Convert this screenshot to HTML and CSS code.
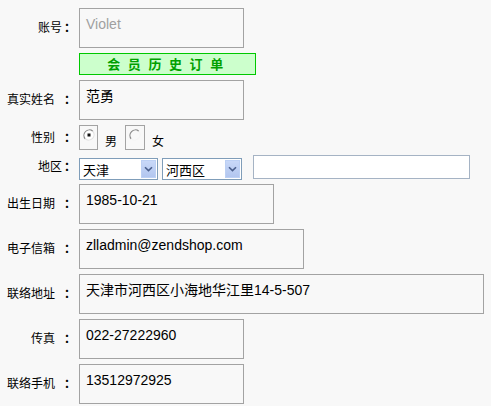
FILE: index.html
```html
<!DOCTYPE html>
<html lang="zh-CN">
<head>
<meta charset="utf-8">
<title>会员资料</title>
<link rel="stylesheet" href="styles.css">
</head>
<body>
<form class="profile">
  <div class="row">
    <span class="label">账号<span class="colon">：</span></span>
    <div class="box w165 muted">Violet</div>
  </div>
  <div class="row">
    <span class="label"></span>
    <a class="btn-history" href="#">会员历史订单</a>
  </div>
  <div class="row">
    <span class="label">真实姓名<span class="colon gap">：</span></span>
    <div class="box w165">范勇</div>
  </div>
  <div class="row row-radio">
    <span class="label">性别<span class="colon gap">：</span></span>
    <span class="radio-box">
      <svg class="radio" width="12" height="12" viewBox="0 0 12 12">
        <path d="M2.2 9.8 A5.4 5.4 0 0 1 9.8 2.2" fill="none" stroke="#8a8a8a" stroke-width="1.2"/>
        <path d="M9.8 2.2 A5.4 5.4 0 0 1 2.2 9.8" fill="none" stroke="#e2e2e2" stroke-width="1.2"/>
        <circle cx="6" cy="6" r="4.3" fill="#fff"/>
        <rect x="4.5" y="4.5" width="3" height="3" fill="#111"/>
      </svg>
    </span>
    <span class="radio-text">男</span>
    <span class="radio-box wide">
      <svg class="radio" width="12" height="12" viewBox="0 0 12 12">
        <path d="M2.2 9.8 A5.4 5.4 0 0 1 9.8 2.2" fill="none" stroke="#8a8a8a" stroke-width="1.2"/>
        <path d="M9.8 2.2 A5.4 5.4 0 0 1 2.2 9.8" fill="none" stroke="#f4f4f4" stroke-width="1.2"/>
      </svg>
    </span>
    <span class="radio-text">女</span>
  </div>
  <div class="row row-area">
    <span class="label">地区<span class="colon">：</span></span>
    <span class="select-wrap">
      <select class="select"><option>天津</option></select>
      <span class="arrow"><svg width="9" height="6" viewBox="0 0 9 6"><path d="M1 1.2 L4.5 4.6 L8 1.2" fill="none" stroke="#4a5f8c" stroke-width="1.6"/></svg></span>
    </span>
    <span class="select-wrap">
      <select class="select s2"><option>河西区</option></select>
      <span class="arrow"><svg width="9" height="6" viewBox="0 0 9 6"><path d="M1 1.2 L4.5 4.6 L8 1.2" fill="none" stroke="#4a5f8c" stroke-width="1.6"/></svg></span>
    </span>
    <input class="text-input" type="text" value="">
  </div>
  <div class="row">
    <span class="label">出生日期<span class="colon gap">：</span></span>
    <div class="box w195">1985-10-21</div>
  </div>
  <div class="row">
    <span class="label">电子信箱<span class="colon gap">：</span></span>
    <div class="box w225">zlladmin@zendshop.com</div>
  </div>
  <div class="row">
    <span class="label">联络地址<span class="colon gap">：</span></span>
    <div class="box w405">天津市河西区小海地华江里14-5-507</div>
  </div>
  <div class="row">
    <span class="label">传真<span class="colon gap">：</span></span>
    <div class="box w165">022-27222960</div>
  </div>
  <div class="row">
    <span class="label">联络手机<span class="colon gap">：</span></span>
    <div class="box w165">13512972925</div>
  </div>
</form>
</body>
</html>
```
FILE: styles.css
```css
html, body {
  margin: 0;
  background: #f8f8f8;
}

body {
  font: 12px/14px "Noto Sans CJK SC", sans-serif;
  color: #000;
}

.profile {
  display: flex;
  flex-direction: column;
  gap: 5px;
  padding-top: 8px;
}

.row {
  display: flex;
  align-items: center;
}

.label {
  width: 74px;
  margin-right: 5px;
  padding-bottom: 2px;
  text-align: right;
  white-space: nowrap;
  flex: none;
}

/* full-width colon, nudged into the right half of its cell */
.colon {
  font-family: "Noto Sans CJK TC", sans-serif;
  font-weight: bold;
  padding-left: 2px;
  margin-right: -2px;
}

.colon.gap { margin-left: 7px; }

/* read-only value boxes */
.box {
  box-sizing: border-box;
  height: 40px;
  border: 1px solid #a3a3a3;
  background: #f8f8f8;
  padding: 6px 6px;
  font: 14px/18px "Liberation Sans", "Noto Sans CJK SC", sans-serif;
  color: #000;
  white-space: nowrap;
}

.muted { color: #a0a0a0; }

.w165 { width: 165px; }
.w195 { width: 195px; }
.w225 { width: 225px; }
.w405 { width: 405px; }

.btn-history {
  box-sizing: border-box;
  width: 177px;
  height: 22px;
  border: 1px solid #00c800;
  background: #ccffcc;
  color: #00a000;
  font-weight: bold;
  font-size: 13px;
  line-height: 20px;
  letter-spacing: 7.6px;
  text-align: center;
  text-decoration: none;
  padding-left: 3px;
}

/* gender */
.row-radio {
  height: 25px;
}

.radio-box {
  box-sizing: border-box;
  width: 19px;
  height: 25px;
  border: 1px solid #a3a3a3;
  padding: 3px 0 0 3px;
  flex: none;
}

.radio-box.wide { width: 20px; }

.radio { display: block; }

.radio-text {
  align-self: flex-end;
  margin: 0 8px 0 7px;
  line-height: 14px;
  padding-bottom: 2px;
}

/* region pickers */
.row-area {
  align-items: flex-start;
  height: 24px;
}

.row-area .label {
  align-self: center;
}

.select-wrap {
  position: relative;
  margin-top: 3px;
  margin-right: 4px;
}

.select {
  appearance: none;
  -webkit-appearance: none;
  box-sizing: border-box;
  width: 79px;
  height: 22px;
  margin: 0;
  border: 1px solid #7f9db9;
  border-radius: 0;
  background: #fff;
  padding: 0 0 0 3px;
  font: 13px "Noto Sans CJK SC", sans-serif;
  color: #000;
  display: block;
}

.select.s2 { width: 80px; }

.arrow {
  position: absolute;
  top: 2px;
  right: 2px;
  width: 15px;
  height: 18px;
  background: linear-gradient(#c8d8f8, #b2c6ef);
  border: 1px solid #bcd0f4;
  box-sizing: border-box;
  display: flex;
  align-items: center;
  justify-content: center;
}

.text-input {
  box-sizing: border-box;
  width: 217px;
  height: 24px;
  margin: 0 0 0 7px;
  border: 1px solid #a5b3c4;
  background: #fff;
  padding: 0 4px;
  font: 13px "Liberation Sans", sans-serif;
}
```
